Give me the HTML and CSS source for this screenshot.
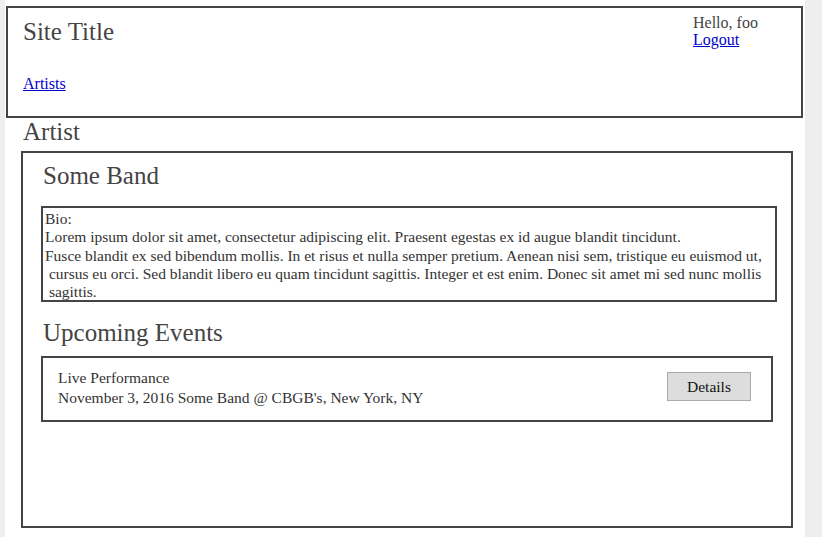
FILE: index.html
```html
<!DOCTYPE html>
<html>
<head>
<meta charset="utf-8">
<title>Artist</title>
<link rel="stylesheet" href="styles.css">
</head>
<body>
<div class="page">
  <header class="site-header">
    <div class="header-main">
      <div class="site-title">Site Title</div>
      <nav class="site-nav"><a href="#">Artists</a></nav>
    </div>
    <div class="user-box">
      <div class="greeting">Hello, foo</div>
      <a href="#">Logout</a>
    </div>
  </header>
  <h1 class="page-title">Artist</h1>
  <section class="artist-card">
    <h2 class="artist-name">Some Band</h2>
    <div class="bio">Bio:<br>Lorem ipsum dolor sit amet, consectetur adipiscing elit. Praesent egestas ex id augue blandit tincidunt.<br>Fusce blandit ex sed bibendum mollis. In et risus et nulla semper pretium. Aenean nisi sem, tristique eu euismod ut,<br>&nbsp;cursus eu orci. Sed blandit libero eu quam tincidunt sagittis. Integer et est enim. Donec sit amet mi sed nunc mollis<br>&nbsp;sagittis.</div>
    <h2 class="section-title">Upcoming Events</h2>
    <div class="event">
      <div class="event-info">
        <div class="event-name">Live Performance</div>
        <div class="event-meta">November 3, 2016 Some Band @ CBGB's, New York, NY</div>
      </div>
      <button class="details-btn" type="button">Details</button>
    </div>
  </section>
</div>
</body>
</html>
```
FILE: styles.css
```css
html, body {
  margin: 0;
  padding: 0;
}
body {
  background: #eeeeee;
  font-family: "Liberation Serif", "DejaVu Serif", serif;
  color: #444;
}
.page {
  width: 800px;
  margin-left: 5px;
  background: #fff;
  min-height: 537px;
  padding-top: 6px;
  padding-left: 1px;
  box-sizing: border-box;
}
.site-header {
  width: 797px;
  height: 112px;
  box-sizing: border-box;
  border: 2px solid #444;
  display: flex;
  justify-content: space-between;
  padding: 0 0 0 15px;
}
.site-title {
  font-size: 25px;
  line-height: 30px;
  margin-top: 9px;
  color: #444;
}
.site-nav {
  margin-top: 28px;
  font-size: 16px;
  line-height: 18px;
}
a {
  color: #0000cc;
}
.user-box {
  width: 108px;
  padding-top: 6px;
  font-size: 16px;
  line-height: 17px;
}
.page-title {
  font-weight: normal;
  font-size: 25px;
  line-height: 28px;
  margin: 0 0 5px 17px;
  color: #444;
}
.artist-card {
  margin-left: 15px;
  width: 772px;
  height: 377px;
  box-sizing: border-box;
  border: 2px solid #444;
  padding: 0 14px 0 18px;
}
.artist-name, .section-title {
  font-weight: normal;
  font-size: 25px;
  line-height: 30px;
  margin: 8px 0 0 2px;
  color: #444;
}
.bio {
  margin-top: 15px;
  border: 2px solid #444;
  font-size: 15.5px;
  line-height: 18.3px;
  padding: 2px 2px 0 2px;
  color: #333;
  height: 96px;
  box-sizing: border-box;
}
.section-title {
  margin-top: 16px;
}
.event {
  margin-top: 8px;
  width: 732px;
  height: 66px;
  box-sizing: border-box;
  border: 2px solid #444;
  display: flex;
  justify-content: space-between;
  align-items: flex-start;
  padding: 10px 20px 0 15px;
  font-size: 15.5px;
  color: #333;
}
.event-name, .event-meta {
  line-height: 20px;
}
.details-btn {
  margin-top: 4px;
  width: 84px;
  height: 29px;
  background: #dddddd;
  border: 1px solid #aaa;
  font-family: "Liberation Serif", serif;
  font-size: 15.5px;
  color: #111;
  padding: 0;
}
```
